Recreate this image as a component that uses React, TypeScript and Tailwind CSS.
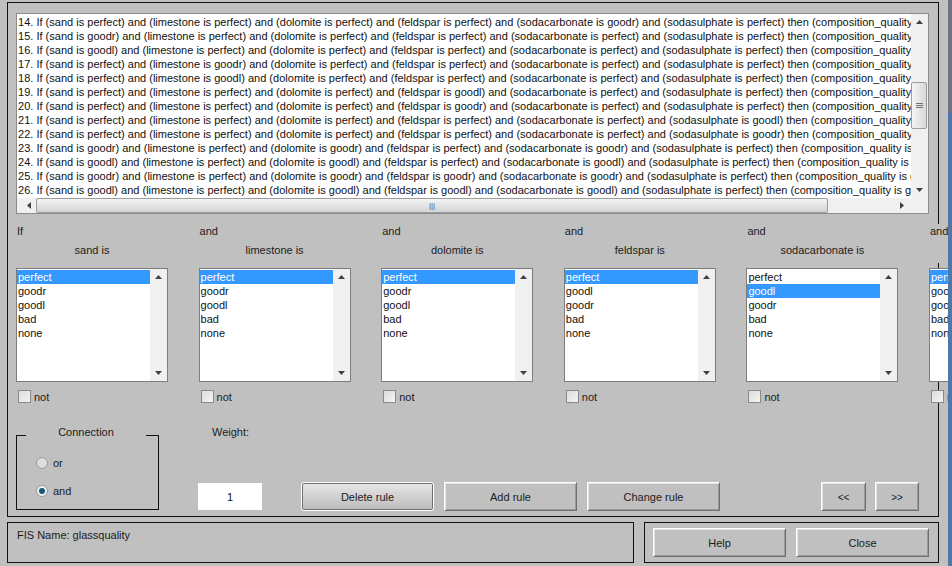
import type { ReactNode } from "react"

const rules: [number, string, string, string, string, string, string, string][] = [
  [14, "perfect", "perfect", "perfect", "perfect", "goodr", "perfect", ""],
  [15, "goodr", "perfect", "perfect", "perfect", "perfect", "perfect", ""],
  [16, "goodl", "perfect", "perfect", "perfect", "perfect", "perfect", ""],
  [17, "perfect", "goodr", "perfect", "perfect", "perfect", "perfect", ""],
  [18, "perfect", "goodl", "perfect", "perfect", "perfect", "perfect", ""],
  [19, "perfect", "perfect", "perfect", "goodl", "perfect", "perfect", ""],
  [20, "perfect", "perfect", "perfect", "goodr", "perfect", "perfect", ""],
  [21, "perfect", "perfect", "perfect", "perfect", "perfect", "goodl", ""],
  [22, "perfect", "perfect", "perfect", "perfect", "perfect", "goodr", ""],
  [23, "goodr", "perfect", "goodr", "perfect", "goodr", "perfect", " is"],
  [24, "goodl", "perfect", "goodl", "perfect", "goodl", "perfect", " is good"],
  [25, "goodr", "perfect", "goodr", "goodr", "goodr", "perfect", " is good"],
  [26, "goodl", "perfect", "goodl", "goodl", "goodl", "perfect", " is good"],
]

const columns = [
  { head: "If", name: "sand is", items: ["perfect", "goodr", "goodl", "bad", "none"], selected: 0 },
  { head: "and", name: "limestone is", items: ["perfect", "goodr", "goodl", "bad", "none"], selected: 0 },
  { head: "and", name: "dolomite is", items: ["perfect", "goodr", "goodl", "bad", "none"], selected: 0 },
  { head: "and", name: "feldspar is", items: ["perfect", "goodl", "goodr", "bad", "none"], selected: 0 },
  { head: "and", name: "sodacarbonate is", items: ["perfect", "goodl", "goodr", "bad", "none"], selected: 1 },
  { head: "and", name: "sodasulphate is", items: ["perfect", "goodl", "goodr", "bad", "none"], selected: 0 },
]

function Arrow({ dir }: { dir: "up" | "down" | "left" | "right" }) {
  const points = {
    up: "0,4 3.5,0 7,4",
    down: "0,0 7,0 3.5,4",
    left: "4,0 4,7 0,3.5",
    right: "0,0 4,3.5 0,7",
  }[dir]
  const flat = dir === "up" || dir === "down"
  return (
    <svg width={flat ? 7 : 4} height={flat ? 4 : 7} className="block">
      <polygon points={points} fill="#404040" />
    </svg>
  )
}

function Button({ children, className }: { children: ReactNode; className: string }) {
  return (
    <button
      className={`flex items-center justify-center border border-t-white border-l-white border-r-[#6f6f6f] border-b-[#6f6f6f] bg-[#c0c0c0] pt-px text-[#1c1c1c] shadow-[inset_1px_1px_0_#e4e4e4,inset_-1px_-1px_0_#9a9a9a] ${className}`}
    >
      {children}
    </button>
  )
}

function ListColumn({ head, name, items, selected }: (typeof columns)[number]) {
  return (
    <div className="w-[182.6px] shrink-0">
      <div className="h-[39px] w-[152px] bg-[#c0c0c0]">
        <div className="h-[14px] pl-px leading-[14px]">{head}</div>
        <div className="mt-[5px] h-[14px] text-center leading-[14px]">{name}</div>
      </div>
      <div className="mt-[5px] flex h-[114px] w-[152px] border border-[#7d7d7d] bg-white">
        <div className="min-w-0 flex-1 pt-px">
          {items.map((item, i) => (
            <div
              key={item}
              className={`h-[14px] pl-px leading-[14px] ${i === selected ? "bg-[#3399ff] text-white" : "text-[#111]"}`}
            >
              {item}
            </div>
          ))}
        </div>
        <div className="flex w-[17px] flex-col items-center justify-between bg-[#f0f0f0] py-[6px]">
          <Arrow dir="up" />
          <Arrow dir="down" />
        </div>
      </div>
      <div className="mt-[8px] flex h-[13px] items-center gap-[3px]">
        <div className="ml-[2px] h-[13px] w-[13px] border border-[#8a8a8a] bg-gradient-to-br from-[#dcdcdc] to-[#f4f4f4]" />
        <span className="pt-px leading-[13px]">not</span>
      </div>
    </div>
  )
}

function Radio({ label, checked }: { label: string; checked?: boolean }) {
  return (
    <div className="flex h-[14px] items-center gap-[5px]">
      <div
        className={`flex h-[12px] w-[12px] items-center justify-center rounded-full border border-[#9a9a9a] ${checked ? "bg-[#f0f0f0]" : "bg-[#dedede]"}`}
      >
        {checked && <div className="h-[6px] w-[6px] rounded-full bg-[#14597c]" />}
      </div>
      <span>{label}</span>
    </div>
  )
}

export default function App() {
  return (
    <div className="relative h-[566px] w-[952px] overflow-hidden bg-[#c0c0c0] pl-[7px] pt-[2px] text-[11px] text-[#1c1c1c] [font-family:'Liberation_Sans',Arial,sans-serif]">
      {/* main frame */}
      <div className="h-[515px] w-[932px] border border-[#111] pl-[8px] pt-[10px]">
        <div className="relative flex h-[201px] w-[913px] border border-[#8c8c8c] bg-white">
          <div className="h-[184px] min-w-0 flex-1 overflow-hidden pl-px pt-px">
            {rules.map(([n, sand, lime, dolo, feld, soda, sulph, tail]) => (
              <div key={n} className="h-[14px] whitespace-nowrap leading-[14px] tracking-[0.012px] text-[#111]">
                {n}. If (sand is {sand}) and (limestone is {lime}) and (dolomite is {dolo}) and (feldspar is {feld}) and
                (sodacarbonate is {soda}) and (sodasulphate is {sulph}) then (composition_quality{tail}
              </div>
            ))}
          </div>
          <div className="relative flex h-[184px] w-[17px] flex-col items-center justify-between bg-[#f0f0f0] py-[6px]">
            <Arrow dir="up" />
            <div className="absolute left-0 top-[68px] flex h-[47px] w-[16px] flex-col items-center justify-center gap-px rounded-[2px] border border-[#9c9c9c] bg-gradient-to-r from-[#f4f4f4] to-[#d8d8d8]">
              <div className="h-px w-[7px] bg-[#707070]" />
              <div className="h-px w-[7px] bg-[#707070]" />
              <div className="h-px w-[7px] bg-[#707070]" />
            </div>
            <Arrow dir="down" />
          </div>
          {/* horizontal scrollbar */}
          <div className="absolute inset-x-0 bottom-0 flex h-[15px] items-center bg-[#f0f0f0]">
            <div className="flex w-[19px] justify-center pl-[4px]">
              <Arrow dir="left" />
            </div>
            <div className="flex h-[15px] w-[792px] items-center justify-center rounded-[2px] border border-[#9c9c9c] bg-gradient-to-b from-[#f4f4f4] to-[#d4d4d4]">
              <span className="text-[8px] leading-none text-[#555]">|||</span>
            </div>
            <div className="ml-[72px]">
              <Arrow dir="right" />
            </div>
          </div>
        </div>

        <div className="mt-[10px] flex">
          {columns.map((col) => (
            <ListColumn key={col.name} {...col} />
          ))}
        </div>

        {/* connection, weight and rule buttons */}
        <div className="mt-[22px] flex h-[85px] items-end">
          <div className="relative flex h-[75px] w-[143px] flex-col gap-[14px] border border-[#111] pl-[19px] pt-[20px]">
            <div className="absolute -top-[11px] left-[9px] w-[120px] bg-[#c0c0c0] text-center leading-[14px]">
              Connection
            </div>
            <Radio label="or" />
            <Radio label="and" checked />
          </div>
          <div className="ml-[39px] flex h-full w-[64px] flex-col justify-between">
            <div className="pl-[14px] leading-[14px]">Weight:</div>
            <div className="flex h-[27px] items-center justify-center bg-white pt-px text-[#111]">1</div>
          </div>
          <button className="ml-[40px] flex h-[27px] w-[131px] items-center justify-center rounded-[2px] border border-[#6f6f6f] bg-gradient-to-b from-[#e6e6e6] to-[#bdbdbd] pt-px text-[#1c1c1c] outline outline-1 outline-white">
            Delete rule
          </button>
          <Button className="-mb-px ml-[11px] h-[29px] w-[133px]">Add rule</Button>
          <Button className="-mb-px ml-[10px] h-[29px] w-[133px]">Change rule</Button>
          <Button className="-mb-px ml-[101px] h-[29px] w-[45px] text-[10px]">&lt;&lt;</Button>
          <Button className="-mb-px ml-[9px] h-[29px] w-[44px] text-[10px]">&gt;&gt;</Button>
        </div>
      </div>

      {/* bottom frames */}
      <div className="mt-[5px] flex gap-[10px]">
        <div className="h-[41px] w-[627px] border border-[#111] pl-[9px] pt-[5px] leading-[14px]">
          FIS Name: glassquality
        </div>
        <div className="flex h-[41px] w-[295px] gap-[10px] border border-[#111] pl-[8px] pt-[5px]">
          <Button className="h-[29px] w-[133px]">Help</Button>
          <Button className="h-[29px] w-[133px]">Close</Button>
        </div>
      </div>

      {/* window edge */}
      <div className="absolute inset-y-0 right-0 flex w-[4px] flex-col">
        <div className="h-[113px] bg-[#6c7480]" />
        <div className="flex-1 bg-[#4f77a8]" />
      </div>
    </div>
  )
}
